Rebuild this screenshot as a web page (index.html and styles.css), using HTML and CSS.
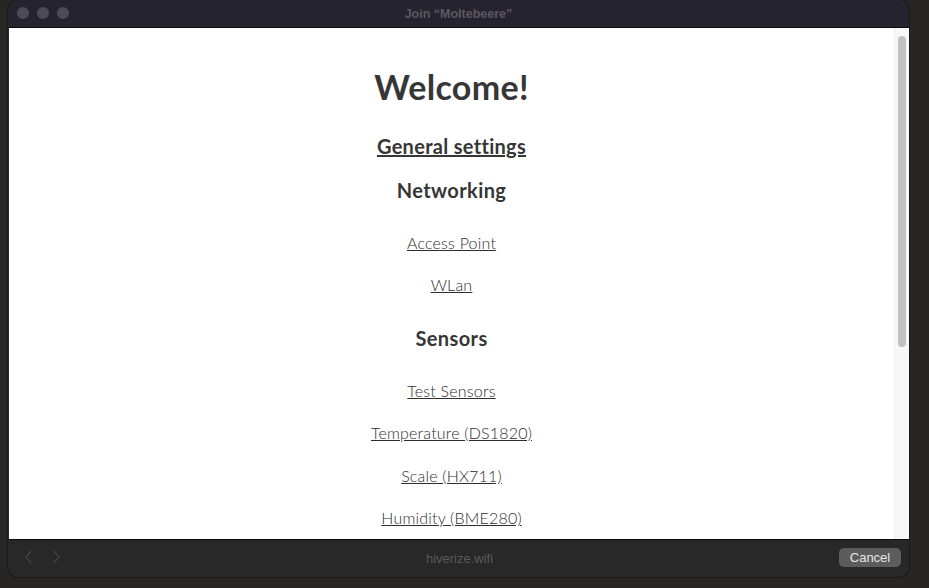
FILE: index.html
```
<!DOCTYPE html>
<html>
<head>
<meta charset="utf-8">
<link rel="stylesheet" href="styles.css">
</head>
<body>
<div class="window">
  <div class="titlebar">
    <div class="lights"><span class="light"></span><span class="light"></span><span class="light"></span></div>
    <div class="title">Join “Moltebeere”</div>
  </div>
  <div class="main">
    <div class="page">
      <h1 class="welcome">Welcome!</h1>
      <a class="section-link" href="#">General settings</a>
      <h2 class="group">Networking</h2>
      <a class="link" href="#">Access Point</a>
      <a class="link" href="#">WLan</a>
      <h2 class="group">Sensors</h2>
      <a class="link" href="#">Test Sensors</a>
      <a class="link" href="#">Temperature (DS1820)</a>
      <a class="link wide" href="#">Scale (HX711)</a>
      <a class="link" href="#">Humidity (BME280)</a>
    </div>
    <div class="scrollbar"><div class="thumb"></div></div>
  </div>
  <div class="bottombar">
    <div class="nav">
      <svg width="10" height="14" viewBox="0 0 10 14"><path d="M7 1 L2 7 L7 13" fill="none" stroke="#444" stroke-width="1.3"/></svg>
      <svg width="10" height="14" viewBox="0 0 10 14"><path d="M3 1 L8 7 L3 13" fill="none" stroke="#444" stroke-width="1.3"/></svg>
    </div>
    <div class="host">hiverize.wifi</div>
    <button class="cancel">Cancel</button>
  </div>
</div>
</body>
</html>
```
FILE: styles.css
```
html, body {
  margin: 0;
  padding: 0;
  background: #272625;
  width: 929px;
  height: 588px;
  overflow: hidden;
}
.window {
  margin-left: 8px;
  width: 901px;
  height: 577px;
  background: #282828;
  border-radius: 10px;
  overflow: hidden;
  display: flex;
  flex-direction: column;
  box-shadow: 0 0 0 1px #1a1a1a;
  font-family: Lato, "Noto Sans", sans-serif;
}
.titlebar {
  height: 27px;
  background: #25232d;
  border-bottom: 1px solid #0c0c0e;
  position: relative;
  display: flex;
  align-items: center;
  justify-content: center;
  flex-shrink: 0;
}
.lights {
  position: absolute;
  left: 9px;
  top: 7px;
  display: flex;
  gap: 8px;
}
.light {
  width: 12px;
  height: 12px;
  border-radius: 50%;
  background: #4c4a55;
}
.title {
  color: #5a5862;
  font-family: "Liberation Sans", Arial, sans-serif;
  font-weight: bold;
  font-size: 12.5px;
  margin-left: 0;
}
.main {
  height: 511px;
  display: flex;
  margin-left: 1px;
  flex-shrink: 0;
  background: #fff;
}
.page {
  flex: 1;
  display: flex;
  flex-direction: column;
  align-items: center;
  color: #363636;
  padding-top: 39px;
}
.welcome {
  margin: 0;
  font-size: 34px;
  line-height: 40px;
  font-weight: 700;
  letter-spacing: 0.3px;
}
.section-link {
  margin-top: 27px;
  font-size: 20px;
  line-height: 24px;
  font-weight: 700;
  letter-spacing: 0.3px;
  color: #363636;
}
.group {
  margin: 20px 0 0;
  font-size: 20px;
  line-height: 24px;
  font-weight: 700;
  letter-spacing: 0.4px;
}
.group + .link {
  margin-top: 31px;
}
.link + .group {
  margin-top: 31px;
}
.link {
  margin-top: 22px;
  font-size: 16px;
  line-height: 20px;
  font-weight: 300;
  letter-spacing: 0.2px;
  color: #2e2e2e;
}
.link.wide {
  margin-top: 23px;
}
.scrollbar {
  width: 14px;
  background: #f7f7f7;
  border-left: 1px solid #ececec;
  display: flex;
  justify-content: center;
  padding-top: 8px;
}
.thumb {
  width: 8px;
  height: 311px;
  border-radius: 4px;
  background: #c1c1c1;
}
.bottombar {
  flex: 1;
  border-top: 1px solid #0c0c0c;
  position: relative;
  display: flex;
  align-items: center;
  justify-content: center;
  background: #282828;
}
.nav {
  position: absolute;
  left: 16px;
  top: 10px;
  display: flex;
  gap: 17px;
}
.host {
  color: #5a5a5a;
  font-family: "Liberation Sans", Arial, sans-serif;
  font-size: 13px;
  margin-left: 2px;
}
.cancel {
  position: absolute;
  right: 8px;
  top: 8px;
  width: 62px;
  height: 19px;
  border: none;
  border-radius: 5px;
  background: #5c5c5c;
  color: #e6e6e6;
  font-family: "Liberation Sans", Arial, sans-serif;
  font-size: 13px;
  padding: 0;
}
```
